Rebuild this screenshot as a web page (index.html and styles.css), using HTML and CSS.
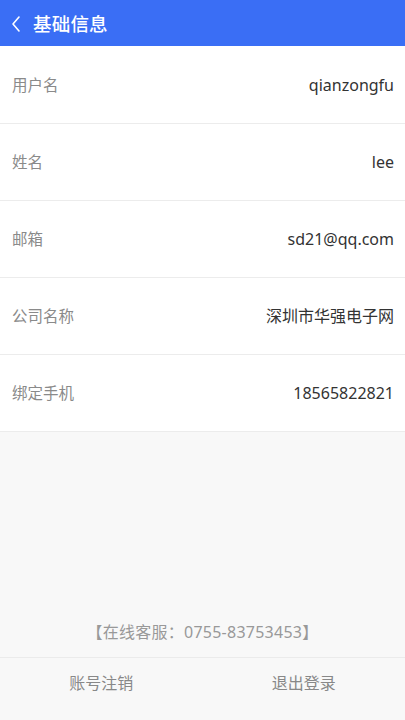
FILE: index.html
```html
<!DOCTYPE html>
<html lang="zh">
<head>
<meta charset="utf-8">
<link rel="stylesheet" href="styles.css">
</head>
<body>
<div class="page">
  <header class="topbar">
    <svg class="back" width="12" height="18" viewBox="0 0 12 18"><path d="M9 2 L3 9 L9 16" fill="none" stroke="#fff" stroke-width="1.6" stroke-linecap="round" stroke-linejoin="round"/></svg>
    <h1 class="title">基础信息</h1>
  </header>
  <section class="list">
    <div class="row"><span class="label">用户名</span><span class="value">qianzongfu</span></div>
    <div class="row"><span class="label">姓名</span><span class="value">lee</span></div>
    <div class="row"><span class="label">邮箱</span><span class="value">sd21@qq.com</span></div>
    <div class="row"><span class="label">公司名称</span><span class="value">深圳市华强电子网</span></div>
    <div class="row"><span class="label">绑定手机</span><span class="value">18565822821</span></div>
  </section>
  <div class="spacer"></div>
  <div class="service">【在线客服：0755-83753453】</div>
  <footer class="actions">
    <span class="action">账号注销</span>
    <span class="action">退出登录</span>
  </footer>
</div>
</body>
</html>
```

FILE: styles.css
```css
* { box-sizing: border-box; }
html, body { margin: 0; padding: 0; }
body {
  font-family: "Noto Sans", "Noto Sans CJK SC", sans-serif;
  background: #f8f8f8;
}
.page {
  width: 405px;
  height: 720px;
  display: flex;
  flex-direction: column;
}
.topbar {
  height: 46px;
  background: #3a6ef5;
  display: flex;
  align-items: center;
  padding-left: 10px;
  padding-top: 2px;
  flex-shrink: 0;
}
.back { display: block; margin-right: 11px; }
.title {
  margin: 0;
  color: #fff;
  font-size: 18.5px;
  font-weight: 500;
  line-height: 24px;
  letter-spacing: 0.2px;
}
.list { background: #fff; }
.row {
  height: 77px;
  display: flex;
  align-items: center;
  justify-content: space-between;
  padding: 0 11px 0 12px;
  border-bottom: 1px solid #ececec;
}
.row:first-child { height: 78px; }
.label {
  font-size: 15.5px;
  color: #8a8a8a;
  line-height: 22px;
}
.value {
  font-size: 16px;
  color: #333;
  line-height: 22px;
}
.spacer { flex: 1; }
.service {
  text-align: center;
  font-size: 16px;
  color: #999;
  line-height: 22px;
  letter-spacing: 0.25px;
  padding-bottom: 14px;
}
.actions {
  height: 63px;
  border-top: 1px solid #ebebeb;
  display: flex;
  padding-bottom: 12px;
  align-items: center;
}
.action {
  flex: 1;
  text-align: center;
  font-size: 16px;
  color: #888;
  line-height: 22px;
}
```
